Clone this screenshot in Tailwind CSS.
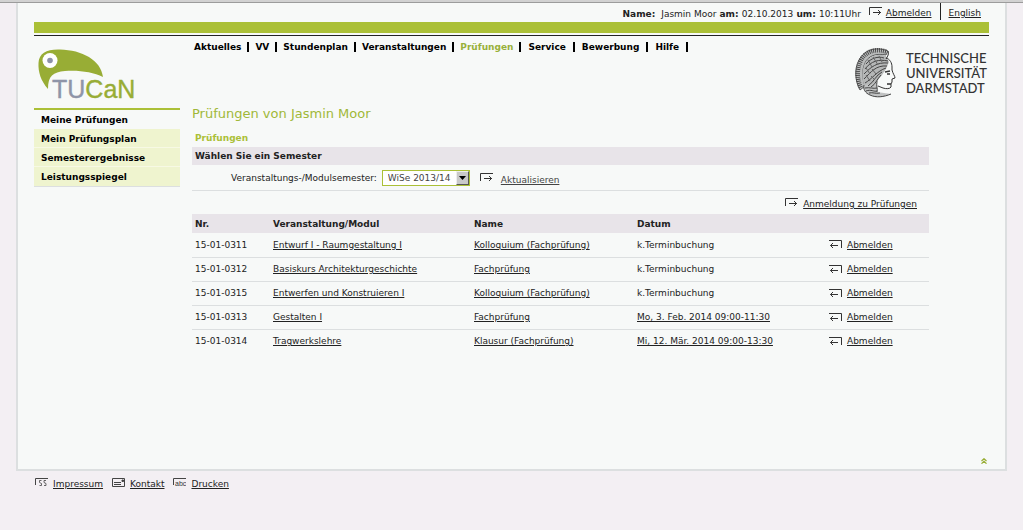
<!DOCTYPE html>
<html lang="de">
<head>
<meta charset="utf-8">
<meta name="viewport" content="width=device-width, initial-scale=1">
<title>TUCaN – Prüfungen</title>
<script src="https://cdn.jsdelivr.net/npm/@tailwindcss/browser@4"></script>
</head>
<body class="min-h-screen bg-[#f3eff3] font-['DejaVu_Sans','Verdana',sans-serif] text-[9px] leading-3 text-[#222]">

<svg class="hidden" aria-hidden="true">
  <symbol id="go" viewBox="0 0 13 9"><path d="M.5 8V.5H13M4 5.500h8M9 3l2.500 2.500L9 8" fill="none" stroke="#333"/></symbol>
  <symbol id="back" viewBox="0 0 13 9"><path d="M12.500 8V.5H0M9 5.500H1.500M4 3L1.500 5.500 4 8" fill="none" stroke="#333"/></symbol>
</svg>

<div class="h-[3px] border-b border-[#9c9c9c] bg-[#d2d2d2]"></div>

<div class="mx-4 border-x-2 border-b-2 border-[#dcdfe0] bg-[#f7f9f8] px-4">
  <div class="flex h-[19px] items-start justify-end pr-2">
    <p class="mt-[5px] whitespace-pre"><b>Name: </b> Jasmin Moor<b> am: </b>02.10.2013<b> um: </b>10:11Uhr</p>
    <svg class="mt-1 ml-2 h-[9px] w-[13px]"><use href="#go"/></svg>
    <a href="#" class="mt-1 ml-1 underline">Abmelden</a>
    <span class="mx-2 h-[17px] w-px bg-[#222]"></span>
    <a href="#" class="mt-1 underline">English</a>
  </div>
  <div class="h-[11px] bg-[#abc037]"></div>
  <div class="mt-[2px] h-px bg-[#222]"></div>

  <header class="flex h-[72px] items-start">
    <a href="#" aria-label="TUCaN" class="w-[158px] shrink-0 pt-3">
      <svg class="h-[54px] w-[104px]" viewBox="0 0 104 54">
        <path d="M14 41C7 33 4 24 4.500 15 5 5 13 1 26 1.500 48 2 67 12 69 29 59 24 45 22 31 23 19 24 14 28 14 41Z" fill="#98ad35"/>
        <circle cx="16" cy="12.500" r="7.500" fill="#fff"/><circle cx="16" cy="12.500" r="2.800" fill="#8d92a8"/>
        <text x="18" y="50" font-family="Liberation Sans, Arial, sans-serif" font-size="25" fill="#8f95a8" stroke="#8f95a8" stroke-width=".4">TU<tspan fill="#98ad35" stroke="#98ad35">CaN</tspan></text>
      </svg>
    </a>
    <nav class="flex flex-1 items-center pt-[6px] pl-[2px] font-bold text-black">
      <a href="#" class="border-r-2 border-black pr-[6px] leading-[10px]">Aktuelles</a>
      <a href="#" class="border-r-2 border-black px-[6px] leading-[10px]">VV</a>
      <a href="#" class="border-r-2 border-black px-[6px] leading-[10px]">Stundenplan</a>
      <a href="#" class="border-r-2 border-black px-[6px] leading-[10px]">Veranstaltungen</a>
      <a href="#" class="border-r-2 border-black px-[6px] leading-[10px] text-[#98b03a]">Prüfungen</a>
      <a href="#" class="border-r-2 border-black px-[7px] leading-[10px]">Service</a>
      <a href="#" class="border-r-2 border-black px-[7px] leading-[10px]">Bewerbung</a>
      <a href="#" class="border-r-2 border-black px-[7px] leading-[10px]">Hilfe</a>
    </nav>
    <div class="flex shrink-0 gap-2 pt-[11px] pr-[2px]">
      <svg class="h-[52px] w-[44px]" viewBox="0 0 44 52" fill="none" stroke="#333">
        <path d="M34 4C22-1 10 3 5 13 0 22 1 34 6 43L11 39C8 31 8 23 11 16 14 9 22 6 32 8Z" fill="#b9bbbb" stroke-width=".8"/>
        <path d="M32 4.500C20 1 11 5 6.500 14 2.500 23 3 33 7 41" stroke-width="4.500" stroke="#444" stroke-dasharray=".9 1.100"/>
        <path d="M11 16C15 9 24 6 32 9l3 6-3 7-4 6-5 6-7 6-5 0C7 32 8 23 11 16Z" fill="#b5b7b7" stroke="none"/>
        <path d="M10 38c-1 4 1 8 6 10 6 3 14 2 21-1l-14-2 0-9Z" fill="#c0c2c2" stroke="none"/>
        <path d="M34 4c1 3 0 5-2 8M32 11c4 1 6 5 6 9l0 3c1 4 3 6 3 8l-3 1 0 3-1 2 0 3c-1 2-5 2-8 1l-5-2"/>
        <path d="M31 25l5-1M33 27l3 0M33 37l4 0" stroke-width="1.300"/>
        <path d="M12 17c5-6 12-8 18-6M11 22C17 14 25 12 34 14M10 27c7-7 13-12 24-11M10 32C17 25 22 18 33 19M11 36c7-4 12-12 21-15M14 39c6-4 8-11 14-14M17 40c5-3 6-8 10-12" stroke="#444"/>
        <path d="M14 13l4 7M19 10l5 8M25 9l3 6M12 21l4 6M12 28l4 6M18 22l4 5M17 29l4 4" stroke="#666"/>
        <path d="M10 38c-1 4 1 8 6 10 6 3 14 2 21-1M11 41c5-1 8 1 12 0M12 44c5-2 8 1 11 0M15 46c4-1 6 1 11 0M23 34c-1 5 1 8 0 11" stroke="#444"/>
      </svg>
      <p class="pt-1 font-['Lato',sans-serif] text-[13px] leading-[15px] font-medium text-[#333]">TECHNISCHE<br>UNIVERSITÄT<br>DARMSTADT</p>
    </div>
  </header>

  <div class="flex gap-3">
    <aside class="w-[146px] shrink-0">
      <ul class="border-t-2 border-[#abc037] font-bold text-black">
        <li><a href="#" class="block h-[19px] px-[7px] pt-1">Meine Prüfungen</a></li>
        <li><a href="#" class="block h-[19px] border-b border-[#f7f9e4] bg-[#eff4cf] px-[7px] pt-1">Mein Prüfungsplan</a></li>
        <li><a href="#" class="block h-[19px] border-b border-[#f7f9e4] bg-[#eff4cf] px-[7px] pt-1">Semesterergebnisse</a></li>
        <li><a href="#" class="block h-[20px] border-b border-[#dcdfe0] bg-[#eff4cf] px-[7px] pt-1">Leistungsspiegel</a></li>
      </ul>
    </aside>

    <main class="flex-1 pr-[60px]">
      <h1 class="text-[13px] leading-3 text-[#a0b838]">Prüfungen von Jasmin Moor</h1>
      <h2 class="mt-3 mb-[3px] pl-[3px] font-bold text-[#abc037]">Prüfungen</h2>
      <form>
        <h3 class="h-[18px] bg-[#e8e4e9] px-[3px] pt-[3px] font-bold">Wählen Sie ein Semester</h3>
        <div class="flex h-[26px] items-center border-b border-[#dcdfe0] pl-[39px]">
          <label for="semester">Veranstaltungs-/Modulsemester:</label>
          <span class="relative ml-[5px]">
            <select id="semester" class="block h-4 w-[88px] appearance-none border border-[#abc037] bg-white pl-[5px] text-[9px] leading-3 text-[#444]"><option>WiSe 2013/14</option></select>
            <span class="pointer-events-none absolute top-px right-px flex h-[14px] w-[13px] items-center justify-center border border-t-[#eee] border-r-[#555] border-b-[#555] border-l-[#eee] bg-[#c9c9c9]">
              <svg class="h-[4px] w-[7px]" viewBox="0 0 7 4"><path d="M0 0h7L3.500 4z"/></svg>
            </span>
          </span>
          <svg class="ml-[10px] h-[9px] w-[13px]"><use href="#go"/></svg>
          <button type="button" class="mt-1 ml-2 text-[#444] underline">Aktualisieren</button>
        </div>
      </form>
      <div class="flex h-[23px] items-center justify-end pr-3">
        <svg class="h-[9px] w-[13px]"><use href="#go"/></svg>
        <a href="#" class="mt-[3px] ml-[5px] underline">Anmeldung zu Prüfungen</a>
      </div>
      <table class="w-full table-fixed text-left">
        <colgroup><col class="w-[78px]"><col class="w-[201px]"><col class="w-[163px]"><col class="w-[192px]"><col></colgroup>
        <thead class="bg-[#e8e4e9]">
          <tr class="h-[19px]"><th class="px-[3px]">Nr.</th><th class="px-[3px]">Veranstaltung/Modul</th><th class="px-[3px]">Name</th><th class="px-[3px]">Datum</th><td></td></tr>
        </thead>
        <tbody class="divide-y divide-[#dcdfe0]">
          <tr class="h-6"><td class="px-[3px]">15-01-0311</td><td class="px-[3px]"><a href="#" class="underline">Entwurf I - Raumgestaltung I</a></td><td class="px-[3px]"><a href="#" class="underline">Kolloquium (Fachprüfung)</a></td><td class="px-[3px]">k.Terminbuchung</td><td class="px-[3px]"><a href="#" class="flex items-center gap-[5px] underline"><svg class="h-[9px] w-[13px]"><use href="#back"/></svg>Abmelden</a></td></tr>
          <tr class="h-6"><td class="px-[3px]">15-01-0312</td><td class="px-[3px]"><a href="#" class="underline">Basiskurs Architekturgeschichte</a></td><td class="px-[3px]"><a href="#" class="underline">Fachprüfung</a></td><td class="px-[3px]">k.Terminbuchung</td><td class="px-[3px]"><a href="#" class="flex items-center gap-[5px] underline"><svg class="h-[9px] w-[13px]"><use href="#back"/></svg>Abmelden</a></td></tr>
          <tr class="h-6"><td class="px-[3px]">15-01-0315</td><td class="px-[3px]"><a href="#" class="underline">Entwerfen und Konstruieren I</a></td><td class="px-[3px]"><a href="#" class="underline">Kolloquium (Fachprüfung)</a></td><td class="px-[3px]">k.Terminbuchung</td><td class="px-[3px]"><a href="#" class="flex items-center gap-[5px] underline"><svg class="h-[9px] w-[13px]"><use href="#back"/></svg>Abmelden</a></td></tr>
          <tr class="h-6"><td class="px-[3px]">15-01-0313</td><td class="px-[3px]"><a href="#" class="underline">Gestalten I</a></td><td class="px-[3px]"><a href="#" class="underline">Fachprüfung</a></td><td class="px-[3px]"><a href="#" class="underline">Mo, 3. Feb. 2014 09:00-11:30</a></td><td class="px-[3px]"><a href="#" class="flex items-center gap-[5px] underline"><svg class="h-[9px] w-[13px]"><use href="#back"/></svg>Abmelden</a></td></tr>
          <tr class="h-6"><td class="px-[3px]">15-01-0314</td><td class="px-[3px]"><a href="#" class="underline">Tragwerkslehre</a></td><td class="px-[3px]"><a href="#" class="underline">Klausur (Fachprüfung)</a></td><td class="px-[3px]"><a href="#" class="underline">Mi, 12. Mär. 2014 09:00-13:30</a></td><td class="px-[3px]"><a href="#" class="flex items-center gap-[5px] underline"><svg class="h-[9px] w-[13px]"><use href="#back"/></svg>Abmelden</a></td></tr>
        </tbody>
      </table>
    </main>
  </div>

  <div class="flex justify-end pt-[105px] pr-[2px] pb-[5px]">
    <a href="#" aria-label="Nach oben"><svg class="h-[6px] w-[6px]" viewBox="0 0 6 6" fill="none" stroke="#98ad35" stroke-width="1.200"><path d="M.5 3L3 .7 5.500 3M.5 5.700L3 3.400l2.500 2.300"/></svg></a>
  </div>
</div>

<footer class="flex items-start gap-2 px-[35px] pt-[7px]">
  <a href="#" class="flex items-start gap-[5px] underline"><svg class="h-[10px] w-[13px]" viewBox="0 0 13 10" fill="none" stroke="#444"><path d="M.5 7V.5H13"/><path d="M6.500 2.500h-2v2l2 1v2h-2M11 2.500H9v2l2 1v2H9" stroke-width=".8"/></svg><span>Impressum</span></a>
  <a href="#" class="ml-px flex items-start gap-[5px] underline"><svg class="h-[10px] w-[13px]" viewBox="0 0 13 10" fill="none" stroke="#444"><path d="M.5.5h12v8H.5zM2 4.500h7M2 6.500h7"/><path d="M10 2h1.500v1.500H10z" fill="#444"/></svg><span>Kontakt</span></a>
  <a href="#" class="ml-px flex items-start gap-[5px] underline"><svg class="h-[10px] w-[13px]" viewBox="0 0 13 10" fill="none" stroke="#444"><path d="M.5 7V.5H13"/><text x="2" y="8" font-family="Liberation Sans, sans-serif" font-size="7" fill="#333" stroke="none">abc</text></svg><span>Drucken</span></a>
</footer>
</body>
</html>
